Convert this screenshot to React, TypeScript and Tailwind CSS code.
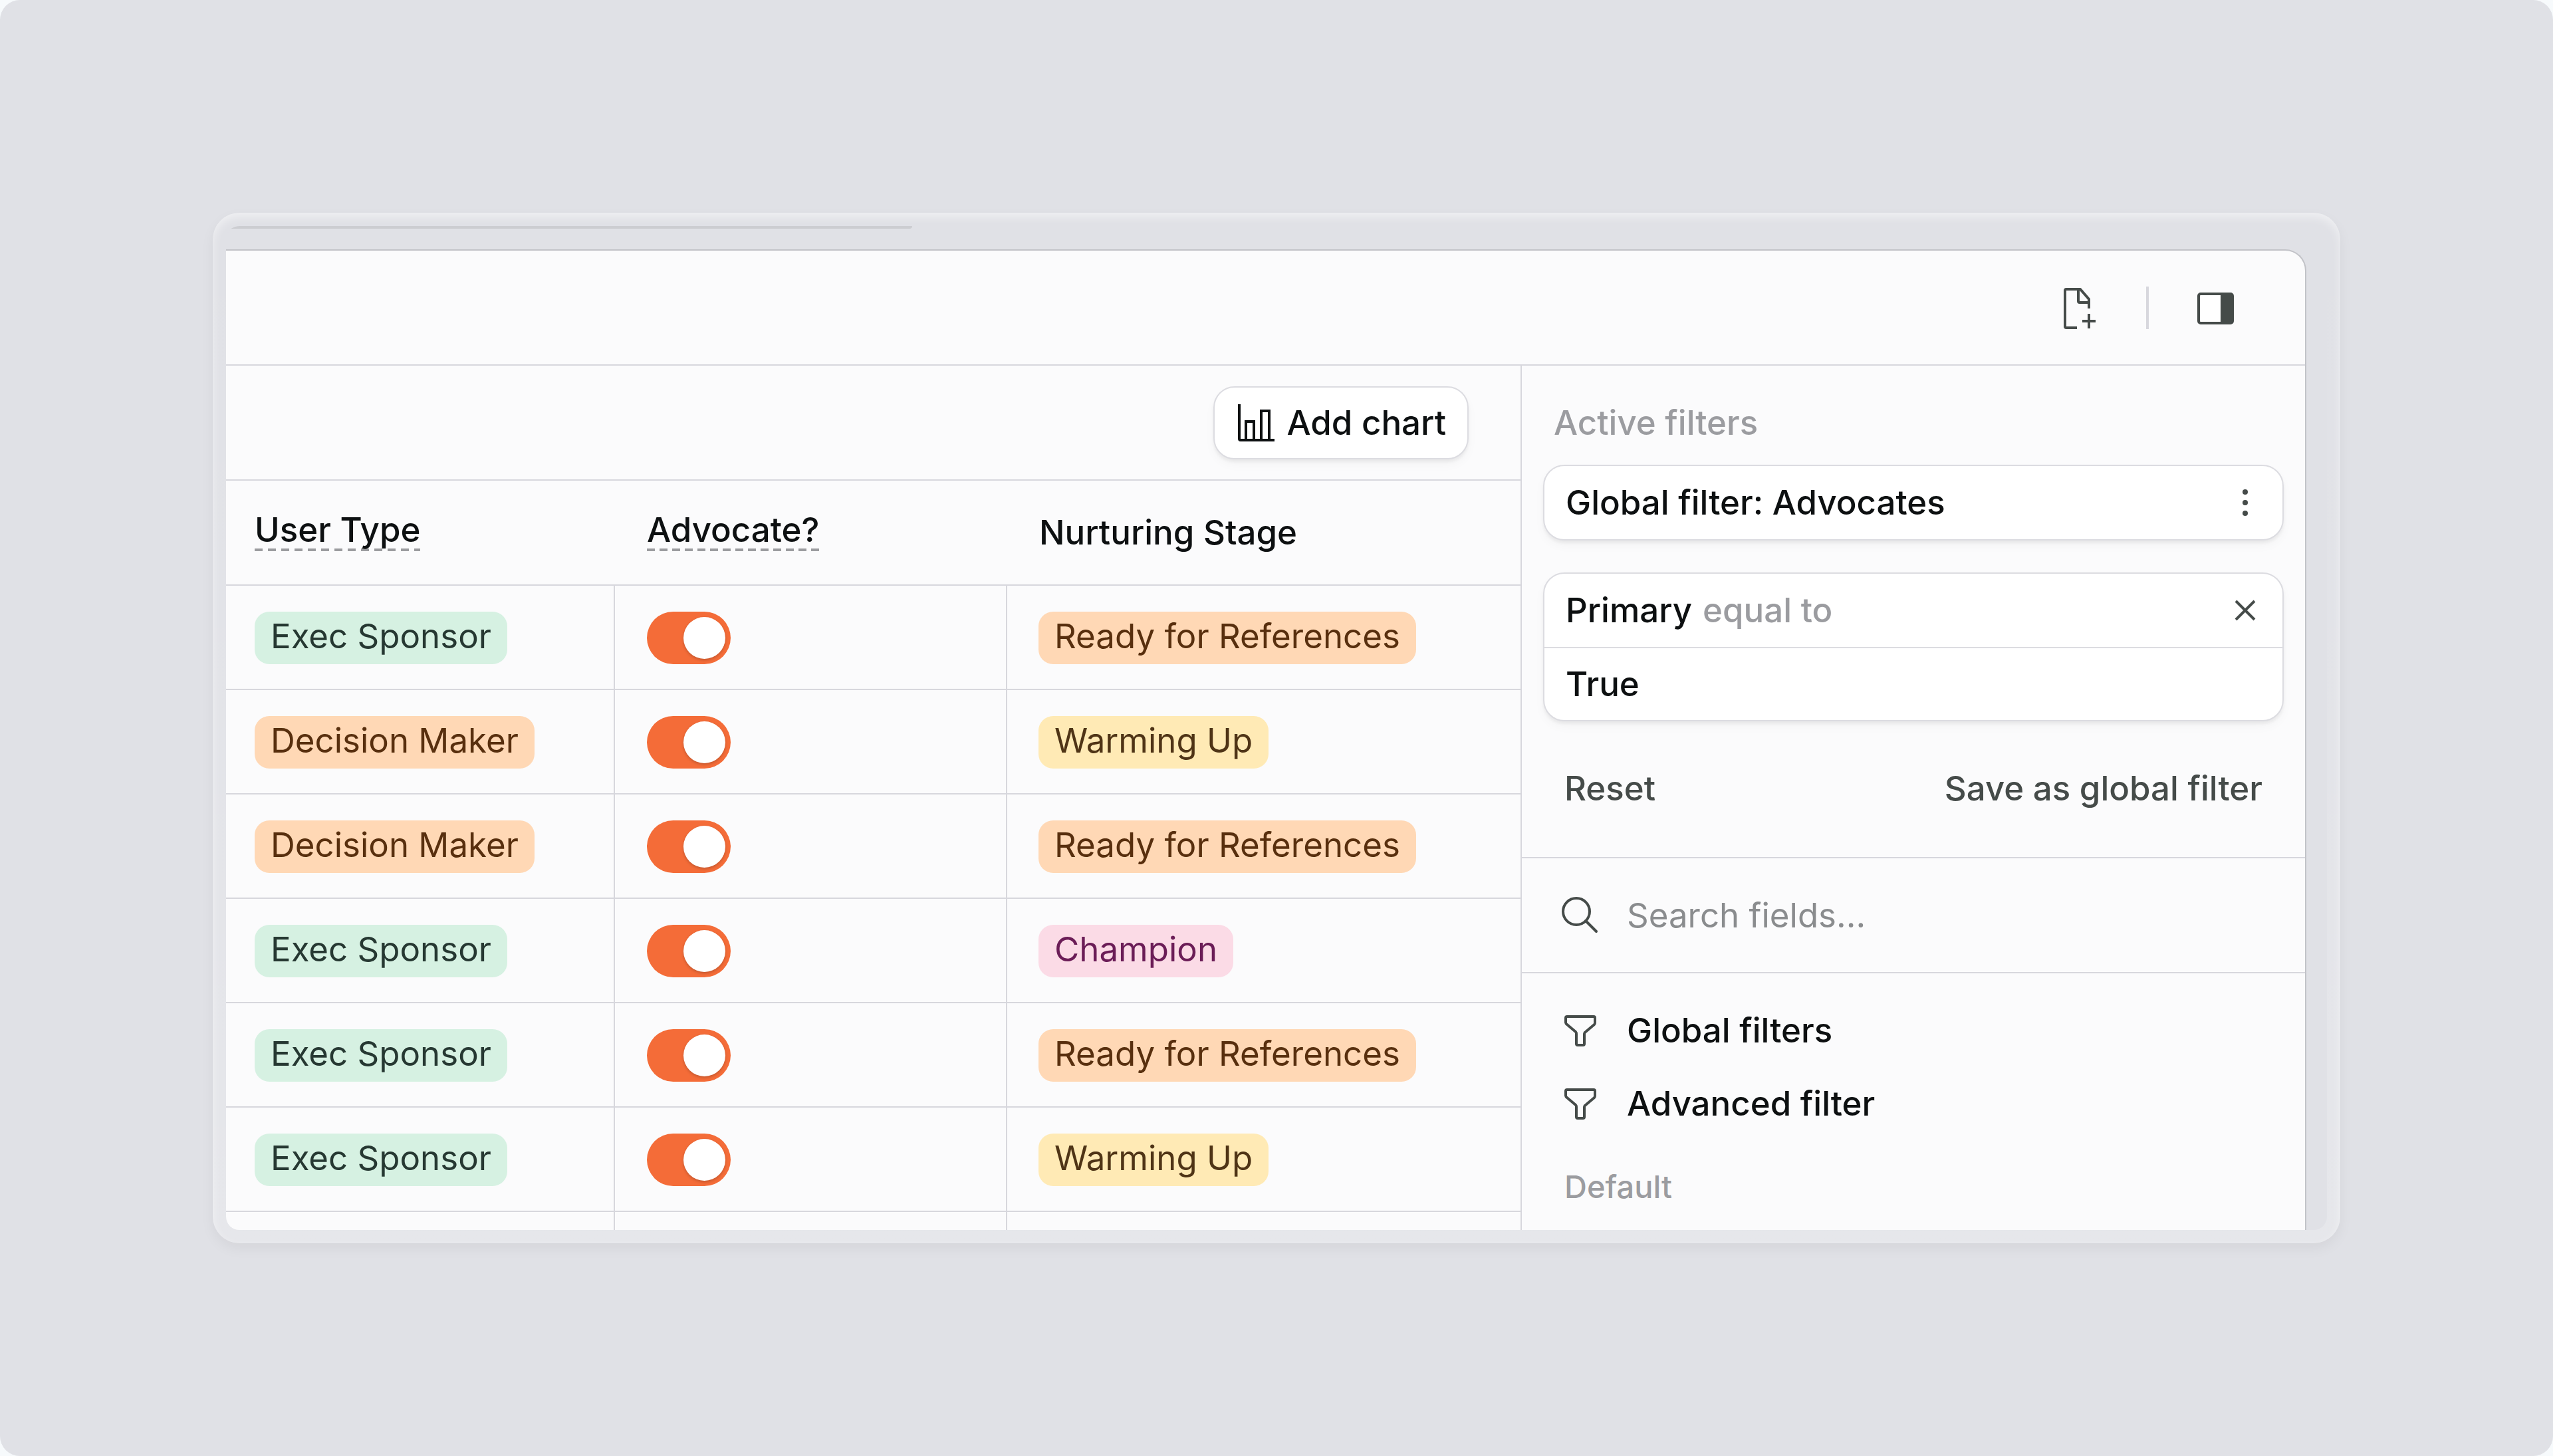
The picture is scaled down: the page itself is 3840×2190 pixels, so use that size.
import { useState } from "react";
import clsx from "clsx";

type Tone = "green" | "orange" | "yellow" | "pink";

const tones: Record<Tone, string> = {
  green: "bg-[#d6f1e2] text-[#263832]",
  orange: "bg-[#ffd8b5] text-[#582f0e]",
  yellow: "bg-[#ffeab5] text-[#4f3416]",
  pink: "bg-[#fbdbe6] text-[#6b1d57]",
};

const rows: { type: string; typeTone: Tone; stage: string; stageTone: Tone }[] = [
  { type: "Exec Sponsor", typeTone: "green", stage: "Ready for References", stageTone: "orange" },
  { type: "Decision Maker", typeTone: "orange", stage: "Warming Up", stageTone: "yellow" },
  { type: "Decision Maker", typeTone: "orange", stage: "Ready for References", stageTone: "orange" },
  { type: "Exec Sponsor", typeTone: "green", stage: "Champion", stageTone: "pink" },
  { type: "Exec Sponsor", typeTone: "green", stage: "Ready for References", stageTone: "orange" },
  { type: "Exec Sponsor", typeTone: "green", stage: "Warming Up", stageTone: "yellow" },
];

function FilePlusIcon() {
  return (
    <svg width="64" height="64" viewBox="0 0 64 64" fill="none" stroke="currentColor" strokeWidth="4">
      <path d="M29 62H13a2 2 0 0 1-2-2V6a2 2 0 0 1 2-2h21l13 15v14" strokeLinejoin="round" />
      <path d="M31 4v18a2 2 0 0 0 2 2h15" />
      <path d="M47 41v22M37 52h20" />
    </svg>
  );
}

function PanelIcon() {
  return (
    <svg width="64" height="64" viewBox="0 0 64 64" fill="none">
      <rect x="6" y="11" width="51" height="44" rx="3" fill="white" stroke="currentColor" strokeWidth="4" />
      <path d="M39 11h16a2 2 0 0 1 2 2v40a2 2 0 0 1-2 2H39z" fill="currentColor" />
    </svg>
  );
}

function ChartIcon() {
  return (
    <svg width="56" height="56" viewBox="0 0 56 56" fill="none" stroke="currentColor" strokeWidth="4">
      <path d="M2 0v52a2 2 0 0 0 2 2h51" />
      <path d="M12 54V26h12v28M35 54V10h12v44" />
    </svg>
  );
}

function SearchIcon() {
  return (
    <svg width="64" height="64" viewBox="0 0 64 64" fill="none" stroke="currentColor" strokeWidth="4" strokeLinecap="round">
      <circle cx="26" cy="26" r="20" />
      <path d="M40 40l16 16" />
    </svg>
  );
}

function FunnelIcon() {
  return (
    <svg width="64" height="64" viewBox="0 0 64 64" fill="none" stroke="currentColor" strokeWidth="4" strokeLinejoin="round">
      <path d="M12 11h40a2 2 0 0 1 2 2v7a4 4 0 0 1-1 3L40 34a4 4 0 0 0-2 3v15a2 2 0 0 1-2 2h-8a2 2 0 0 1-2-2V37a4 4 0 0 0-1-3L12 23a4 4 0 0 1-2-3v-7a2 2 0 0 1 2-2z" />
    </svg>
  );
}

function Badge({ tone, children }: { tone: Tone; children: React.ReactNode }) {
  return (
    <span className={clsx("inline-block rounded-[22px] px-6 pt-[5px] pb-[10px] leading-[64px] align-middle", tones[tone])}>
      {children}
    </span>
  );
}

// the dash pitch is set per label so that the line ends on a full dash
function DashedLabel({ dashes, children }: { dashes: string; children: React.ReactNode }) {
  return (
    <span className={clsx("inline-block bg-[length:100%_4px] bg-bottom bg-no-repeat", dashes)}>
      {children}
    </span>
  );
}

export default function App() {
  const [advocates, setAdvocates] = useState(rows.map(() => true));
  const [query, setQuery] = useState("");

  const toggle = (index: number) =>
    setAdvocates(advocates.map((value, i) => (i === index ? !value : value)));

  return (
    <div className="bg-[#f7fafc] font-['Inter',sans-serif] text-[51px] leading-[64px] text-[#0d1011] [font-optical-sizing:none]">
      <main className="flex h-screen rounded-[30px] bg-[#e0e1e6] p-80">
        {/* Frame */}
        <div className="flex min-w-0 flex-1 rounded-[40px] bg-linear-to-b from-white/0 to-white/20 p-5 shadow-[inset_0_6px_14px_rgba(255,255,255,0.5),0_8px_20px_rgba(0,0,0,0.05)]">
          <div className="flex min-w-0 flex-1 flex-col overflow-hidden rounded-[20px] bg-[#e0e1e6]">
            <div className="h-1 w-[1032px] rounded-br-full bg-[#cccdd1]" />

            {/* Window */}
            <div className="mt-[31px] mr-[31px] flex min-h-0 flex-1 flex-col overflow-hidden rounded-tr-[32px] border-t-2 border-r-2 border-[#c2c3c8] bg-[#fbfbfc]">
              <header className="flex h-[173px] shrink-0 items-center justify-end gap-[69px] border-b-2 border-[#d7d7dd] pr-[102px] text-[#454b49]">
                <button aria-label="New file">
                  <FilePlusIcon />
                </button>
                <span className="h-16 w-1 bg-[#d7d7dd]" />
                <button aria-label="Toggle side panel">
                  <PanelIcon />
                </button>
              </header>

              <div className="flex min-h-0 flex-1">
                {/* Table */}
                <section className="min-w-0 flex-1 overflow-hidden">
                  <div className="flex h-[173px] items-center justify-end border-b-2 border-[#d7d7dd] pt-px pr-[78px]">
                    <button className="flex h-[110px] items-center gap-[18px] rounded-[32px] border-2 border-[#dcdce1] bg-white pr-[32px] pl-[35px] font-medium shadow-[0_4px_4px_rgba(0,0,0,0.05),0_8px_16px_rgba(0,0,0,0.03)]">
                      <ChartIcon />
                      Add chart
                    </button>
                  </div>

                  <table className="w-full table-fixed border-separate border-spacing-0 text-left">
                    <colgroup>
                      <col className="w-[585px]" />
                      <col className="w-[590px]" />
                      <col />
                    </colgroup>
                    <thead>
                      <tr className="h-[158px]">
                        <th className="border-b-2 border-[#d7d7dd] pb-2 pl-[43px] font-medium">
                          <DashedLabel dashes="bg-[repeating-linear-gradient(to_right,#9b9c9f_0_12px,transparent_12px_20px)]">
                            User Type
                          </DashedLabel>
                        </th>
                        <th className="border-b-2 border-[#d7d7dd] pb-2 pl-12 font-medium">
                          <DashedLabel dashes="bg-[repeating-linear-gradient(to_right,#9b9c9f_0_12px,transparent_12px_19px)]">
                            Advocate?
                          </DashedLabel>
                        </th>
                        <th className="border-b-2 border-[#d7d7dd] pl-12 font-medium">Nurturing Stage</th>
                      </tr>
                    </thead>
                    <tbody>
                      {rows.map((row, index) => (
                        <tr key={index} className="h-[157px]">
                          <td className="border-r-2 border-b-2 border-[#d7d7dd] pt-[2px] pl-[43px]">
                            <Badge tone={row.typeTone}>{row.type}</Badge>
                          </td>
                          <td className="border-r-2 border-b-2 border-[#d7d7dd] pt-[2px] pl-12">
                            <input
                              type="checkbox"
                              role="switch"
                              aria-label={`${row.type} is an advocate`}
                              checked={advocates[index]}
                              onChange={() => toggle(index)}
                              className="block h-[79px] w-[126px] appearance-none rounded-full bg-gray-300 p-2 before:block before:size-[63px] before:rounded-full before:bg-white before:shadow-[0_2px_4px_rgba(0,0,0,0.2)] checked:bg-[#f46c38] checked:before:ml-auto"
                            />
                          </td>
                          <td className="border-b-2 border-[#d7d7dd] pt-[2px] pl-[47px]">
                            <Badge tone={row.stageTone}>{row.stage}</Badge>
                          </td>
                        </tr>
                      ))}
                      <tr className="h-[157px]">
                        <td className="border-r-2 border-[#d7d7dd]" />
                        <td className="border-r-2 border-[#d7d7dd]" />
                        <td />
                      </tr>
                    </tbody>
                  </table>
                </section>

                {/* Filters */}
                <aside className="w-[1180px] shrink-0 overflow-hidden border-l-2 border-[#d7d7dd]">
                  <div className="border-b-2 border-[#d7d7dd] px-8 pt-[54px]">
                    <h2 className="px-4 font-medium text-[#9b9ca0]">Active filters</h2>

                    <div className="mt-[31px] flex h-[114px] items-center justify-between rounded-[32px] border-2 border-[#dcdce1] bg-white px-8 font-medium shadow-[0_4px_4px_rgba(0,0,0,0.05),0_8px_16px_rgba(0,0,0,0.03)]">
                      Global filter: Advocates
                      <button aria-label="Filter options" className="text-[#454b49]">
                        <svg width="48" height="48" viewBox="0 0 48 48" fill="currentColor">
                          <circle cx="24" cy="8" r="4" />
                          <circle cx="24" cy="24" r="4" />
                          <circle cx="24" cy="40" r="4" />
                        </svg>
                      </button>
                    </div>

                    <div className="mt-12 rounded-[32px] border-2 border-[#dcdce1] bg-white font-medium shadow-[0_4px_4px_rgba(0,0,0,0.05),0_8px_16px_rgba(0,0,0,0.03)]">
                      <div className="flex h-[112px] items-center justify-between border-b-2 border-[#dcdce1] px-8">
                        <p className="flex gap-4">
                          Primary <span className="text-[#9b9ca0]">equal to</span>
                        </p>
                        <button aria-label="Remove filter" className="text-[#454b49]">
                          <svg width="48" height="48" viewBox="0 0 48 48" fill="none" stroke="currentColor" strokeWidth="4">
                            <path d="M10 10l28 28M38 10L10 38" />
                          </svg>
                        </button>
                      </div>
                      <p className="flex h-[108px] items-center px-8">True</p>
                    </div>

                    <div className="flex h-[204px] items-center justify-between px-8 pb-[2px] font-medium text-[#454b49]">
                      <button>Reset</button>
                      <button>Save as global filter</button>
                    </div>
                  </div>

                  <label className="flex h-[173px] items-center gap-[38px] border-b-2 border-[#d7d7dd] pr-8 pl-14 text-[#454b49]">
                    <SearchIcon />
                    <input
                      type="text"
                      aria-label="Search fields"
                      placeholder="Search fields..."
                      value={query}
                      onChange={(e) => setQuery(e.target.value)}
                      className="min-w-0 flex-1 bg-transparent outline-none placeholder:text-[#8a8c8e]"
                    />
                  </label>

                  <nav className="pt-[31px] font-medium">
                    <button className="flex h-[110px] w-full items-center gap-[38px] pl-14">
                      <span className="text-[#454b49]">
                        <FunnelIcon />
                      </span>
                      Global filters
                    </button>
                    <button className="flex h-[110px] w-full items-center gap-[38px] pl-14">
                      <span className="text-[#454b49]">
                        <FunnelIcon />
                      </span>
                      Advanced filter
                    </button>
                  </nav>
                  <h3 className="mt-10 pl-16 text-[47px] leading-[60px] font-medium text-[#9b9ca0]">Default</h3>
                </aside>
              </div>
            </div>
          </div>
        </div>
      </main>
    </div>
  );
}
